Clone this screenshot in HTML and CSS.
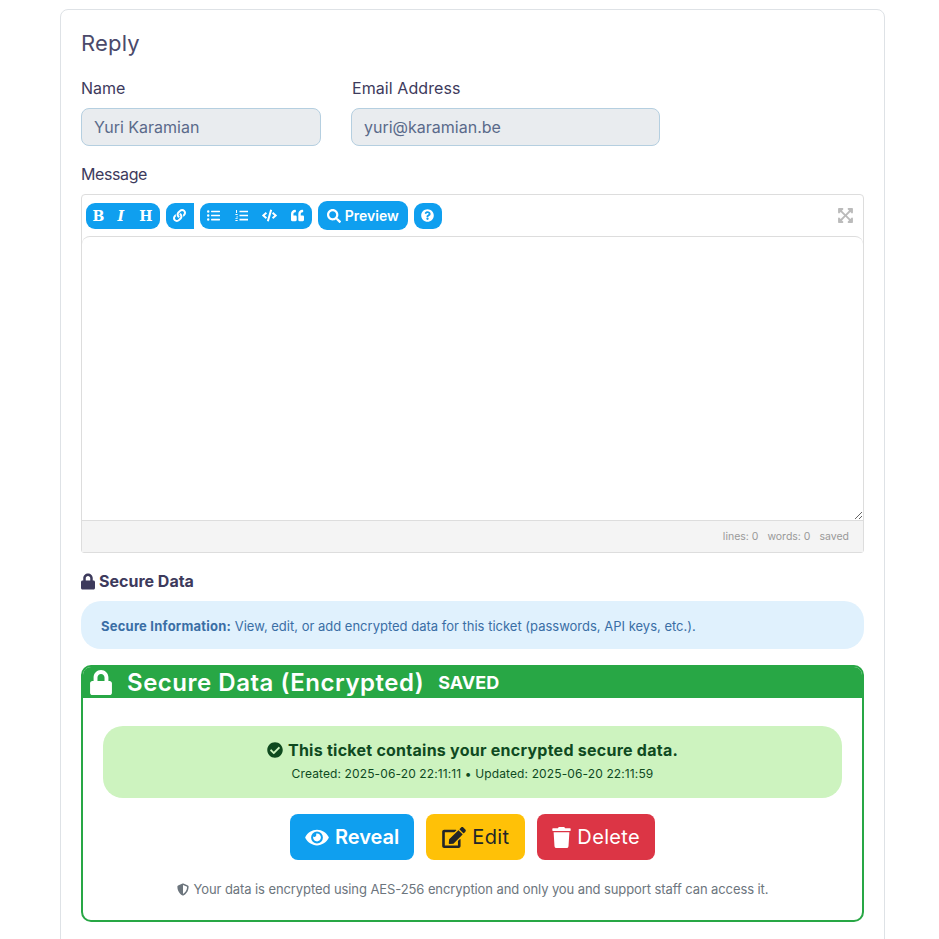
FILE: index.html
```html
<!DOCTYPE html>
<html lang="en">
<head>
  <meta charset="UTF-8">
  <meta name="viewport" content="width=device-width, initial-scale=1.0">
  <title>Reply</title>
  <link rel="stylesheet" href="styles.css">
</head>
<body>
  <div class="card">
    <h2 class="card-title">Reply</h2>

    <div class="form-row">
      <div class="field field-name">
        <label class="label">Name</label>
        <input class="input" type="text" value="Yuri Karamian" disabled>
      </div>
      <div class="field field-email">
        <label class="label label-email">Email Address</label>
        <input class="input" type="text" value="yuri@karamian.be" disabled>
      </div>
    </div>

    <label class="label label-message">Message</label>
    <div class="editor">
      <div class="toolbar">
        <div class="tool-group">
          <span class="tool tool-letter">B</span>
          <span class="tool tool-letter tool-italic">I</span>
          <span class="tool tool-letter tool-heading">H</span>
        </div>
        <div class="tool-group tool-group-left">
          <span class="tool"><svg class="icon" viewBox="0 0 512 512"><path d="M326.612 185.391c59.747 59.809 58.927 155.698.36 214.59-.11.12-.24.25-.36.37l-67.2 67.2c-59.27 59.27-155.699 59.262-214.96 0-59.27-59.26-59.27-155.7 0-214.96l37.106-37.106c9.84-9.84 26.786-3.3 27.294 10.606.648 17.722 3.826 35.527 9.69 52.721 1.986 5.822.567 12.262-3.783 16.612l-13.087 13.087c-28.026 28.026-28.905 73.66-1.155 101.96 28.024 28.579 74.086 28.749 102.325.51l67.2-67.19c28.191-28.191 28.073-73.757 0-101.83-3.701-3.694-7.429-6.564-10.341-8.569a16.037 16.037 0 0 1-6.947-12.606c-.396-10.567 3.348-21.456 11.698-29.806l21.054-21.055c5.521-5.521 14.182-6.199 20.584-1.731a152.482 152.482 0 0 1 20.522 17.197zM467.547 44.449c-59.261-59.262-155.69-59.27-214.96 0l-67.2 67.2c-.12.12-.25.25-.36.37-58.566 58.892-59.387 154.781.36 214.59a152.454 152.454 0 0 0 20.521 17.196c6.402 4.468 15.064 3.789 20.584-1.731l21.054-21.055c8.35-8.35 12.094-19.239 11.698-29.806a16.037 16.037 0 0 0-6.947-12.606c-2.912-2.005-6.64-4.875-10.341-8.569-28.073-28.073-28.191-73.639 0-101.83l67.2-67.19c28.239-28.239 74.3-28.069 102.325.51 27.75 28.3 26.872 73.934-1.155 101.96l-13.087 13.087c-4.35 4.35-5.769 10.79-3.783 16.612 5.864 17.194 9.042 34.999 9.69 52.721.509 13.906 17.454 20.446 27.294 10.606l37.106-37.106c59.271-59.259 59.271-155.699.001-214.959z"/></svg></span>
        </div>
        <div class="tool-group">
          <span class="tool"><svg class="icon" viewBox="0 0 512 512"><path d="M48 48a48 48 0 1 0 48 48 48 48 0 0 0-48-48zm0 160a48 48 0 1 0 48 48 48 48 0 0 0-48-48zm0 160a48 48 0 1 0 48 48 48 48 0 0 0-48-48zm448 16H176a16 16 0 0 0-16 16v32a16 16 0 0 0 16 16h320a16 16 0 0 0 16-16v-32a16 16 0 0 0-16-16zm0-320H176a16 16 0 0 0-16 16v32a16 16 0 0 0 16 16h320a16 16 0 0 0 16-16V80a16 16 0 0 0-16-16zm0 160H176a16 16 0 0 0-16 16v32a16 16 0 0 0 16 16h320a16 16 0 0 0 16-16v-32a16 16 0 0 0-16-16z"/></svg></span>
          <span class="tool"><svg class="icon" viewBox="0 0 512 512"><path d="M40 40h40v120H40zM16 200h88v32H16zM16 360h88v32H16zM16 430h88v40H16zM60 290h44v40H60zM176 64h336v64H176zM176 224h336v64H176zM176 384h336v64H176z"/></svg></span>
          <span class="tool"><svg class="icon icon-wide" viewBox="0 0 640 512"><path d="M278.9 511.5l-61-17.7c-6.4-1.8-10-8.5-8.2-14.9L346.2 8.7c1.8-6.4 8.5-10 14.9-8.2l61 17.7c6.4 1.8 10 8.5 8.2 14.9L293.8 503.3c-1.9 6.4-8.5 10.1-14.9 8.2zm-114-112.2l43.5-46.4c4.6-4.9 4.3-12.7-.8-17.2L117 256l90.6-79.7c5.1-4.5 5.5-12.3.8-17.2l-43.5-46.4c-4.5-4.8-12.1-5.1-17-.5L3.8 247.2c-5.1 4.7-5.1 12.8 0 17.5l144.1 135.1c4.9 4.6 12.5 4.4 17-.5zm327.2.6l144.1-135.1c5.1-4.7 5.1-12.8 0-17.5L492.1 112.1c-4.8-4.5-12.4-4.3-17 .5L431.6 159c-4.6 4.9-4.3 12.7.8 17.2L523 256l-90.6 79.7c-5.1 4.5-5.5 12.3-.8 17.2l43.5 46.4c4.5 4.9 12.1 5.1 17 .6z"/></svg></span>
          <span class="tool"><svg class="icon" viewBox="0 0 512 512"><path d="M464 256h-80v-64c0-35.3 28.7-64 64-64h8c13.3 0 24-10.7 24-24V56c0-13.3-10.7-24-24-24h-8c-88.4 0-160 71.6-160 160v240c0 26.5 21.5 48 48 48h128c26.5 0 48-21.5 48-48V304c0-26.5-21.5-48-48-48zm-288 0H96v-64c0-35.3 28.7-64 64-64h8c13.3 0 24-10.7 24-24V56c0-13.3-10.7-24-24-24h-8C71.6 32 0 103.6 0 192v240c0 26.5 21.5 48 48 48h128c26.5 0 48-21.5 48-48V304c0-26.5-21.5-48-48-48z"/></svg></span>
        </div>
        <div class="tool-preview">
          <svg class="icon icon-search" viewBox="0 0 512 512"><path d="M505 442.7L405.3 343c-4.5-4.5-10.6-7-17-7H372c27.6-35.3 44-79.7 44-128C416 93.1 322.9 0 208 0S0 93.1 0 208s93.1 208 208 208c48.3 0 92.7-16.4 128-44v16.3c0 6.4 2.5 12.5 7 17l99.7 99.7c9.4 9.4 24.6 9.4 33.9 0l28.3-28.3c9.4-9.4 9.4-24.6.1-34zM208 336c-70.7 0-128-57.2-128-128 0-70.7 57.2-128 128-128 70.7 0 128 57.2 128 128 0 70.7-57.2 128-128 128z"/></svg>
          Preview
        </div>
        <div class="tool-group">
          <span class="tool tool-help"><svg class="icon" viewBox="0 0 512 512"><path d="M504 256c0 136.997-111.043 248-248 248S8 392.997 8 256C8 119.083 119.043 8 256 8s248 111.083 248 248zM262.655 90c-54.497 0-89.255 22.957-116.549 63.758-3.536 5.286-2.353 12.415 2.715 16.258l34.699 26.31c5.205 3.947 12.621 3.008 16.665-2.122 17.864-22.658 30.113-35.797 57.303-35.797 20.429 0 45.698 13.148 45.698 32.958 0 14.976-12.363 22.667-32.534 33.976C247.128 238.528 216 254.941 216 296v4c0 6.627 5.373 12 12 12h56c6.627 0 12-5.373 12-12v-1.333c0-28.462 83.186-29.647 83.186-106.667 0-58.002-60.165-102-116.531-102zM256 338c-25.365 0-46 20.635-46 46 0 25.364 20.635 46 46 46s46-20.636 46-46c0-25.365-20.635-46-46-46z"/></svg></span>
        </div>
        <svg class="expand" viewBox="0 0 448 512"><path d="M448 344v112a23.94 23.94 0 0 1-24 24H312c-21.39 0-32.09-25.9-17-41l36.2-36.2L224 295.6 116.77 402.9 153 439c15.09 15.1 4.39 41-17 41H24a23.94 23.94 0 0 1-24-24V344c0-21.4 25.89-32.1 41-17l36.19 36.2L184.46 256 77.18 148.7 41 185c-15.1 15.1-41 4.4-41-17V56a23.94 23.94 0 0 1 24-24h112c21.39 0 32.09 25.9 17 41l-36.2 36.2L224 216.4l107.23-107.3L295 73c-15.09-15.1-4.39-41 17-41h112a23.94 23.94 0 0 1 24 24v112c0 21.4-25.89 32.1-41 17l-36.19-36.2L263.54 256l107.28 107.3L407 327.1c15.1-15.2 41-4.5 41 16.9z"/></svg>
      </div>
      <textarea class="editor-text"></textarea>
      <div class="statusbar">
        <span>lines: 0</span>
        <span>words: 0</span>
        <span>saved</span>
      </div>
    </div>

    <h3 class="secure-heading">
      <svg class="icon-lock" viewBox="0 0 448 512"><path d="M400 224h-24v-72C376 68.2 307.8 0 224 0S72 68.2 72 152v72H48c-26.5 0-48 21.5-48 48v192c0 26.5 21.5 48 48 48h352c26.5 0 48-21.5 48-48V272c0-26.5-21.5-48-48-48zm-104 0H152v-72c0-39.7 32.3-72 72-72s72 32.3 72 72v72z"/></svg>
      Secure Data
    </h3>

    <div class="info-box"><strong>Secure Information:</strong> View, edit, or add encrypted data for this ticket (passwords, API keys, etc.).</div>

    <div class="secure-panel">
      <div class="secure-head">
        <svg class="secure-head-lock" viewBox="0 0 448 512"><path d="M400 224h-24v-72C376 68.2 307.8 0 224 0S72 68.2 72 152v72H48c-26.5 0-48 21.5-48 48v192c0 26.5 21.5 48 48 48h352c26.5 0 48-21.5 48-48V272c0-26.5-21.5-48-48-48zm-104 0H152v-72c0-39.7 32.3-72 72-72s72 32.3 72 72v72z"/></svg>
        <span class="secure-title">Secure Data (Encrypted)</span>
        <span class="secure-badge">SAVED</span>
      </div>
      <div class="secure-body">
        <div class="success-box">
          <div class="success-title">
            <svg class="icon-check" viewBox="0 0 512 512"><path d="M504 256c0 136.967-111.033 248-248 248S8 392.967 8 256 119.033 8 256 8s248 111.033 248 248zM227.314 387.314l184-184c6.248-6.248 6.248-16.379 0-22.627l-22.627-22.627c-6.248-6.249-16.379-6.249-22.628 0L216 308.118l-70.059-70.059c-6.248-6.248-16.379-6.248-22.628 0l-22.627 22.627c-6.248 6.248-6.248 16.379 0 22.627l104 104c6.249 6.249 16.379 6.249 22.628.001z"/></svg>
            This ticket contains your encrypted secure data.
          </div>
          <div class="success-meta">Created: 2025-06-20 22:11:11 • Updated: 2025-06-20 22:11:59</div>
        </div>

        <div class="actions">
          <a class="btn btn-blue"><svg class="btn-icon btn-icon-eye" viewBox="0 0 576 512"><path d="M572.52 241.4C518.29 135.59 410.93 64 288 64S57.68 135.64 3.48 241.41a32.35 32.35 0 0 0 0 29.19C57.71 376.41 165.07 448 288 448s230.32-71.64 284.52-177.41a32.35 32.35 0 0 0 0-29.19zM288 400a144 144 0 1 1 144-144 143.93 143.93 0 0 1-144 144zm0-240a95.31 95.31 0 0 0-25.31 3.79 47.85 47.85 0 0 1-66.9 66.9A95.78 95.78 0 1 0 288 160z"/></svg>Reveal</a>
          <a class="btn btn-yellow"><svg class="btn-icon btn-icon-edit" viewBox="0 0 576 512"><path d="M402.6 83.2l90.2 90.2c3.8 3.8 3.8 10 0 13.8L274.4 405.6l-92.8 10.3c-12.4 1.4-22.9-9.1-21.5-21.5l10.3-92.8L388.8 83.2c3.8-3.8 10-3.8 13.8 0zm162-22.9l-48.8-48.8c-15.2-15.2-39.9-15.2-55.2 0l-35.4 35.4c-3.8 3.8-3.8 10 0 13.8l90.2 90.2c3.8 3.8 10 3.8 13.8 0l35.4-35.4c15.2-15.3 15.2-40 0-55.2zM384 346.2V448H64V128h229.8c3.2 0 6.2-1.3 8.5-3.5l40-40c7.6-7.6 2.2-20.5-8.5-20.5H48C21.5 64 0 85.5 0 112v352c0 26.5 21.5 48 48 48h352c26.5 0 48-21.5 48-48V306.2c0-10.7-12.9-16-20.5-8.5l-40 40c-2.2 2.3-3.5 5.3-3.5 8.5z"/></svg>Edit</a>
          <a class="btn btn-red"><svg class="btn-icon btn-icon-trash" viewBox="0 0 448 512"><path d="M432 32H312l-9.4-18.7A24 24 0 0 0 281.1 0H166.8a23.72 23.72 0 0 0-21.4 13.3L136 32H16A16 16 0 0 0 0 48v32a16 16 0 0 0 16 16h416a16 16 0 0 0 16-16V48a16 16 0 0 0-16-16zM53.2 467a48 48 0 0 0 47.9 45h245.8a48 48 0 0 0 47.9-45L416 128H32z"/></svg>Delete</a>
        </div>

        <div class="secure-note">
          <svg class="icon-shield" viewBox="0 0 512 512"><path d="M466.5 83.7l-192-80a48.15 48.15 0 0 0-36.9 0l-192 80C27.7 91.1 16 108.6 16 128c0 198.5 114.5 335.7 221.5 380.3 11.8 4.9 25.1 4.9 36.9 0C360.1 472.6 496 349.3 496 128c0-19.4-11.7-36.9-29.5-44.3zM256.1 446.3l-.1-381 175.9 73.3c-3.3 151.4-82.1 261.1-175.8 307.7z"/></svg>
          Your data is encrypted using AES-256 encryption and only you and support staff can access it.
        </div>
      </div>
    </div>
  </div>
</body>
</html>
```

FILE: styles.css
```css
* {
  box-sizing: border-box;
}
body {
  margin: 0;
  background-color: #fff;
  color: #3d3a5c;
  font-family: Inter, "Noto Sans", sans-serif;
  font-size: 16px;
}
.card {
  width: 825px;
  margin: 9px 0 0 60px;
  padding: 20px 20px 30px;
  background-color: #fff;
  border: 1px solid #dee2e6;
  border-radius: 8px;
}
.card-title {
  margin: 0 0 22px;
  font-size: 22px;
  font-weight: 400;
  line-height: 26px;
  letter-spacing: 0.2px;
  color: #4b4a6b;
}
.form-row {
  display: flex;
  gap: 30px;
  margin-bottom: 18px;
}
.field-name {
  width: 240px;
}
.field-email {
  width: 309px;
}
.label {
  display: block;
  margin-bottom: 10px;
  font-size: 16px;
  line-height: 20px;
  color: #3d3a5c;
}
.label-email {
  margin-left: 1px;
  letter-spacing: 0.08px;
}
.label-message {
  letter-spacing: -0.4px;
}
.input {
  display: block;
  width: 100%;
  height: 38px;
  padding: 0 12px;
  background-color: #e9ecef;
  border: 1px solid #b5cfe0;
  border-radius: 8px;
  font-family: inherit;
  font-size: 16px;
  color: #5a6a8a;
  opacity: 1;
}

/* editor */
.editor {
  border: 1px solid #ddd;
  border-radius: 4px 4px 3px 3px;
}
.toolbar {
  display: flex;
  align-items: center;
  gap: 6px;
  height: 41px;
  padding: 0 4px;
  position: relative;
}
.tool-group {
  display: flex;
  height: 26px;
  background-color: #0f9fef;
  border-radius: 9px;
}
.tool-group-left {
  border-radius: 9px 0 0 9px;
}
.tool {
  display: flex;
  align-items: center;
  justify-content: center;
  width: 28px;
  height: 26px;
  color: #fff;
}
.tool-letter {
  width: 24.6px;
  font-family: "DejaVu Serif", serif;
  font-size: 14px;
  font-weight: 700;
}
.tool-italic {
  font-style: italic;
  padding-right: 4px;
}
.tool-heading {
  padding-right: 3px;
}
.icon {
  width: 13px;
  height: 13px;
  fill: #fff;
}
.icon-wide {
  width: 15px;
}
.tool-preview {
  display: flex;
  align-items: center;
  gap: 4px;
  width: 90px;
  height: 29px;
  justify-content: center;
  background-color: #0f9fef;
  border-radius: 9px;
  color: #fff;
  font-size: 14px;
  font-weight: 600;
}
.icon-search {
  width: 14px;
  height: 14px;
}
.expand {
  margin-left: auto;
  margin-right: 6px;
  width: 15px;
  height: 17px;
  fill: #bbb;
}
.editor-text {
  display: block;
  width: 100%;
  height: 284px;
  padding: 10px;
  border: 1px solid #ddd;
  border-width: 1px 0 0 0;
  border-radius: 8px 8px 0 0;
  background-color: #fff;
  outline: none;
  resize: vertical;
}
.statusbar {
  display: flex;
  justify-content: flex-end;
  align-items: center;
  gap: 9px;
  height: 32px;
  padding: 0 14px;
  background-color: #f4f4f4;
  border-top: 1px solid #ddd;
  font-size: 10.5px;
  color: #999;
}

/* secure data */
.secure-heading {
  display: flex;
  align-items: center;
  gap: 4px;
  margin: 18px 0 10px;
  font-size: 16px;
  font-weight: 700;
  line-height: 20px;
  color: #3d3a5c;
}
.icon-lock {
  width: 14px;
  height: 17px;
  fill: #3d3a5c;
}
.info-box {
  padding: 16px 20px;
  height: 48px;
  margin-bottom: 16px;
  background-color: #e0f1fd;
  border-radius: 20px;
  font-size: 13px;
  line-height: 18px;
  color: #3a6ea5;
}
.info-box strong {
  letter-spacing: 0.22px;
}
.secure-panel {
  border: 2px solid #28a745;
  border-radius: 10px;
  overflow: hidden;
}
.secure-head {
  display: flex;
  align-items: center;
  height: 31px;
  padding: 0 7px;
  background-color: #28a745;
  color: #fff;
}
.secure-head-lock {
  width: 22px;
  height: 25px;
  fill: #fff;
}
.secure-title {
  margin-left: 15px;
  font-size: 24px;
  font-weight: 600;
  letter-spacing: 0.52px;
}
.secure-badge {
  margin-left: 14px;
  font-size: 18px;
  font-weight: 700;
}
.secure-body {
  padding: 28px 20px 22px;
}
.success-box {
  height: 72px;
  padding-top: 14px;
  background-color: #cdf3bf;
  border-radius: 20px;
  text-align: center;
  color: #0f4a1f;
}
.success-title {
  display: flex;
  align-items: center;
  justify-content: center;
  gap: 5px;
  font-size: 16px;
  font-weight: 700;
  line-height: 20px;
  letter-spacing: 0.25px;
}
.icon-check {
  width: 16px;
  height: 16px;
  fill: #0f4a1f;
}
.success-meta {
  margin-top: 6px;
  font-size: 12px;
  line-height: 16px;
  letter-spacing: 0.12px;
}
.actions {
  display: flex;
  justify-content: center;
  gap: 12px;
  margin-top: 16px;
}
.btn {
  display: flex;
  align-items: center;
  gap: 6px;
  height: 46px;
  padding: 0 16px;
  border-radius: 8px;
  font-size: 20px;
  letter-spacing: 0.35px;
  color: #fff;
}
.btn-blue {
  padding: 0 15px;
  background-color: #0f9fef;
  font-weight: 600;
  letter-spacing: 0;
}
.btn-yellow {
  background-color: #ffc107;
  color: #212529;
}
.btn-red {
  padding: 0 15px;
  background-color: #dc3545;
}
.btn-icon {
  height: 21px;
  fill: currentColor;
}
.btn-icon-eye,
.btn-icon-edit {
  width: 24px;
}
.btn-icon-trash {
  width: 19px;
}
.secure-note {
  display: flex;
  align-items: center;
  justify-content: center;
  gap: 5px;
  margin-top: 20px;
  font-size: 13px;
  line-height: 18px;
  letter-spacing: -0.09px;
  color: #6c757d;
}
.icon-shield {
  width: 12px;
  height: 13px;
  fill: #6c757d;
}
```
